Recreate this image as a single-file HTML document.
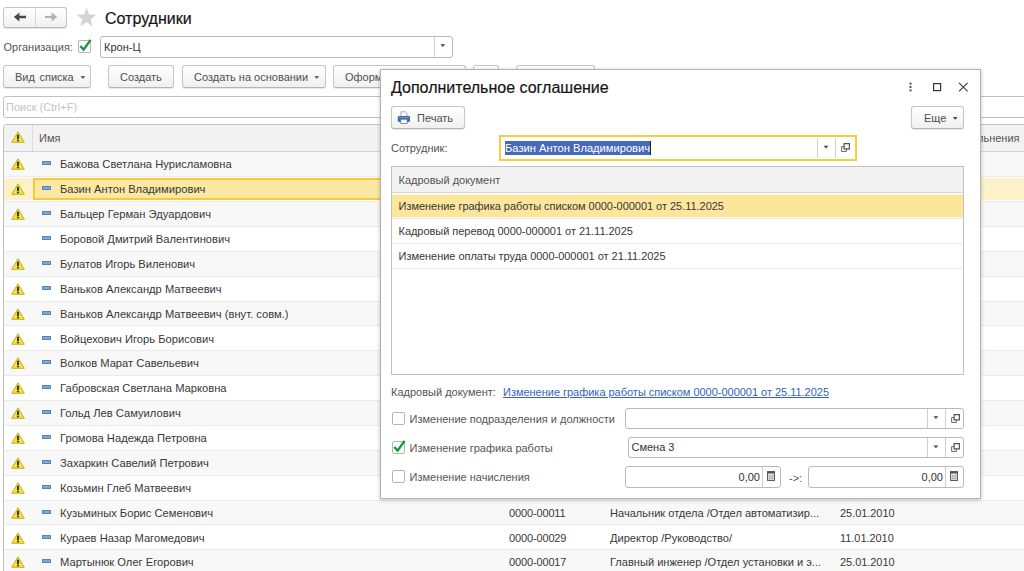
<!DOCTYPE html>
<html><head><meta charset="utf-8"><title>Сотрудники</title>
<style>
*{box-sizing:border-box;margin:0;padding:0}
html,body{width:1024px;height:571px;overflow:hidden;background:#fff}
body{font-family:"Liberation Sans",sans-serif;font-size:11px;color:#333;position:relative}
.abs{position:absolute}
.btn{position:absolute;height:23px;border:1px solid #c6c6c6;border-bottom-color:#b4b4b4;border-radius:3px;background:linear-gradient(#ffffff,#f0f0f0);box-shadow:0 1px 1px rgba(0,0,0,.10);color:#505050;font-size:11px;line-height:21px;white-space:nowrap}
.btn span{position:absolute;top:1px}
.inp{position:absolute;border:1px solid #b9b9b9;border-radius:3px;background:#fff;height:22px;line-height:20px;white-space:nowrap}
.t{position:absolute;white-space:nowrap;line-height:14px}
.lbl{color:#555}
.ttl{font-size:16px;line-height:20px;color:#151515;-webkit-text-stroke:0.2px #151515}
.row{position:absolute;left:4px;width:1020px;height:25px;border-bottom:1px solid #ededed}
.row.alt{background:#f9f9f9}
.row .t{top:6px;color:#333}
.selbox{position:absolute;left:29px;top:0;width:991px;height:25px;background:#fbe8a0;border:2px solid #f7c935}
.warn{position:absolute;left:7px;top:7px}
.rt{color:#383838;font-size:11.18px}
.dash{position:absolute;left:42px;width:9px;height:4px;border-radius:0.5px;background:#7aa9dc;border:1px solid #5583b8}
.vl{position:absolute;width:1px;background:#cfcfcf}
.cb{position:absolute;width:13px;height:13px;border:1px solid #b5b5b5;border-radius:2px;background:#fff}
</style></head><body>
<div class="btn" style="left:3px;top:7px;width:64px;height:21px"></div><div class="vl" style="left:35px;top:8px;height:19px;background:#d8d8d8"></div><svg class="abs" style="left:12px;top:11px" width="16" height="12" viewBox="0 0 16 12"><path d="M1.8 6 L7.4 1.6 L7.4 4.7 L14 4.7 L14 7.3 L7.4 7.3 L7.4 10.4 Z" fill="#4a4a4a"/></svg><svg class="abs" style="left:43px;top:11px" width="16" height="12" viewBox="0 0 16 12"><path d="M14.2 6 L8.6 1.6 L8.6 4.9 L2 4.9 L2 7.1 L8.6 7.1 L8.6 10.4 Z" fill="#b0b0b0"/></svg><svg class="abs" style="left:76px;top:7px" width="21" height="20" viewBox="0 0 21 20"><path d="M10.5 0.8 L13.1 7.4 L20.3 7.7 L14.7 12.2 L16.6 19.2 L10.5 15.2 L4.4 19.2 L6.3 12.2 L0.7 7.7 L7.9 7.4 Z" fill="#d4d4d4"/></svg><div class="t ttl" style="left:105px;top:9px">Сотрудники</div>
<div class="t lbl" style="left:3.5px;top:40px">Организация:</div><div class="cb" style="left:78px;top:40px"></div><svg class="abs" style="left:78px;top:38px" width="15" height="15" viewBox="0 0 15 15"><path d="M2.3 8 L5.6 11.6 L12.6 1.8" stroke="#14993a" stroke-width="2.3" fill="none"/></svg><div class="inp" style="left:100px;top:36px;width:353px"><span style="padding-left:3px;color:#333">Крон-Ц</span></div><div class="vl" style="left:434px;top:37px;height:20px"></div><svg class="abs" style="left:439px;top:43px" width="8" height="6" viewBox="0 0 8 6"><path d="M1.40 1.25 H6.20 L3.80 3.95 Z" fill="#454545"/></svg>
<div class="btn" style="left:3px;top:65px;width:88px"><span style="left:11px;word-spacing:1.5px">Вид списка</span></div><svg class="abs" style="left:79px;top:75px" width="8" height="6" viewBox="0 0 8 6"><path d="M1.50 1.15 H6.30 L3.90 3.85 Z" fill="#454545"/></svg><div class="btn" style="left:108px;top:65px;width:66px"><span style="left:11px">Создать</span></div><div class="btn" style="left:182px;top:65px;width:144px"><span style="left:11px">Создать на основании</span></div><svg class="abs" style="left:313px;top:75px" width="8" height="6" viewBox="0 0 8 6"><path d="M1.35 1.15 H6.15 L3.75 3.85 Z" fill="#454545"/></svg><div class="btn" style="left:333px;top:65px;width:133px"><span style="left:11px">Оформить</span></div><div class="btn" style="left:473px;top:65px;width:26px"></div><div class="btn" style="left:516px;top:65px;width:79px"></div>
<div class="inp" style="left:3px;top:96px;width:1030px;border-color:#c0c0c0"><span style="padding-left:2px;color:#c4c4c4">Поиск (Ctrl+F)</span></div>
<div class="abs" style="left:3px;top:124px;width:1040px;height:500px;border:1px solid #c2c2c2;border-radius:3px"></div><div class="abs" style="left:4px;top:125px;width:1020px;height:27px;background:#f2f2f2;border-bottom:1px solid #d4d4d4;border-radius:2px 0 0 0"></div><div class="vl" style="left:32px;top:125px;height:26px;background:#dadada"></div><svg class="abs" style="left:11px;top:131px" width="14" height="12" viewBox="0 0 14 12"><path d="M7 0.8 L13.3 11.3 L0.7 11.3 Z" fill="#f7e334" stroke="#c4ae22" stroke-width="1" stroke-linejoin="round"/><rect x="5.95" y="3.7" width="2.1" height="4.3" fill="#3d3a1c"/><rect x="5.95" y="8.7" width="2.1" height="1.6" fill="#3d3a1c"/></svg><div class="t lbl" style="left:39px;top:131px">Имя</div><div class="t lbl" style="left:977px;top:131px">льнения</div>
<div class="abs" style="left:4px;top:152px;width:1020px;height:24px;background:#f8f8f8"></div><div class="abs" style="left:4px;top:176px;width:1020px;height:1px;background:#ebebeb"></div><svg class="abs" style="left:11px;top:158px" width="14" height="12" viewBox="0 0 14 12"><path d="M7 0.8 L13.3 11.3 L0.7 11.3 Z" fill="#f7e334" stroke="#c4ae22" stroke-width="1" stroke-linejoin="round"/><rect x="5.95" y="3.7" width="2.1" height="4.3" fill="#3d3a1c"/><rect x="5.95" y="8.7" width="2.1" height="1.6" fill="#3d3a1c"/></svg><div class="dash" style="top:161px"></div><div class="t rt" style="left:60px;top:157px">Бажова Светлана Нурисламовна</div>
<div class="abs" style="left:4px;top:178px;width:1020px;height:22px;background:#fdf1c9"></div><div class="abs" style="left:33px;top:178px;width:460px;height:22px;background:#fbe8a2;border:2px solid #f8ca38"></div><div class="abs" style="left:4px;top:201px;width:1020px;height:1px;background:#ebebeb"></div><svg class="abs" style="left:11px;top:183px" width="14" height="12" viewBox="0 0 14 12"><path d="M7 0.8 L13.3 11.3 L0.7 11.3 Z" fill="#f7e334" stroke="#c4ae22" stroke-width="1" stroke-linejoin="round"/><rect x="5.95" y="3.7" width="2.1" height="4.3" fill="#3d3a1c"/><rect x="5.95" y="8.7" width="2.1" height="1.6" fill="#3d3a1c"/></svg><div class="dash" style="top:186px"></div><div class="t rt" style="left:60px;top:182px">Базин Антон Владимирович</div>
<div class="abs" style="left:4px;top:202px;width:1020px;height:24px;background:#f8f8f8"></div><div class="abs" style="left:4px;top:226px;width:1020px;height:1px;background:#ebebeb"></div><svg class="abs" style="left:11px;top:208px" width="14" height="12" viewBox="0 0 14 12"><path d="M7 0.8 L13.3 11.3 L0.7 11.3 Z" fill="#f7e334" stroke="#c4ae22" stroke-width="1" stroke-linejoin="round"/><rect x="5.95" y="3.7" width="2.1" height="4.3" fill="#3d3a1c"/><rect x="5.95" y="8.7" width="2.1" height="1.6" fill="#3d3a1c"/></svg><div class="dash" style="top:211px"></div><div class="t rt" style="left:60px;top:207px">Бальцер Герман Эдуардович</div>
<div class="abs" style="left:4px;top:251px;width:1020px;height:1px;background:#ebebeb"></div><div class="dash" style="top:236px"></div><div class="t rt" style="left:60px;top:232px">Боровой Дмитрий Валентинович</div>
<div class="abs" style="left:4px;top:252px;width:1020px;height:24px;background:#f8f8f8"></div><div class="abs" style="left:4px;top:276px;width:1020px;height:1px;background:#ebebeb"></div><svg class="abs" style="left:11px;top:258px" width="14" height="12" viewBox="0 0 14 12"><path d="M7 0.8 L13.3 11.3 L0.7 11.3 Z" fill="#f7e334" stroke="#c4ae22" stroke-width="1" stroke-linejoin="round"/><rect x="5.95" y="3.7" width="2.1" height="4.3" fill="#3d3a1c"/><rect x="5.95" y="8.7" width="2.1" height="1.6" fill="#3d3a1c"/></svg><div class="dash" style="top:261px"></div><div class="t rt" style="left:60px;top:257px">Булатов Игорь Виленович</div>
<div class="abs" style="left:4px;top:301px;width:1020px;height:1px;background:#ebebeb"></div><svg class="abs" style="left:11px;top:283px" width="14" height="12" viewBox="0 0 14 12"><path d="M7 0.8 L13.3 11.3 L0.7 11.3 Z" fill="#f7e334" stroke="#c4ae22" stroke-width="1" stroke-linejoin="round"/><rect x="5.95" y="3.7" width="2.1" height="4.3" fill="#3d3a1c"/><rect x="5.95" y="8.7" width="2.1" height="1.6" fill="#3d3a1c"/></svg><div class="dash" style="top:286px"></div><div class="t rt" style="left:60px;top:282px">Ваньков Александр Матвеевич</div>
<div class="abs" style="left:4px;top:302px;width:1020px;height:23px;background:#f8f8f8"></div><div class="abs" style="left:4px;top:325px;width:1020px;height:1px;background:#ebebeb"></div><svg class="abs" style="left:11px;top:308px" width="14" height="12" viewBox="0 0 14 12"><path d="M7 0.8 L13.3 11.3 L0.7 11.3 Z" fill="#f7e334" stroke="#c4ae22" stroke-width="1" stroke-linejoin="round"/><rect x="5.95" y="3.7" width="2.1" height="4.3" fill="#3d3a1c"/><rect x="5.95" y="8.7" width="2.1" height="1.6" fill="#3d3a1c"/></svg><div class="dash" style="top:311px"></div><div class="t rt" style="left:60px;top:307px">Ваньков Александр Матвеевич (внут. совм.)</div>
<div class="abs" style="left:4px;top:350px;width:1020px;height:1px;background:#ebebeb"></div><svg class="abs" style="left:11px;top:333px" width="14" height="12" viewBox="0 0 14 12"><path d="M7 0.8 L13.3 11.3 L0.7 11.3 Z" fill="#f7e334" stroke="#c4ae22" stroke-width="1" stroke-linejoin="round"/><rect x="5.95" y="3.7" width="2.1" height="4.3" fill="#3d3a1c"/><rect x="5.95" y="8.7" width="2.1" height="1.6" fill="#3d3a1c"/></svg><div class="dash" style="top:336px"></div><div class="t rt" style="left:60px;top:332px">Войцехович Игорь Борисович</div>
<div class="abs" style="left:4px;top:351px;width:1020px;height:24px;background:#f8f8f8"></div><div class="abs" style="left:4px;top:375px;width:1020px;height:1px;background:#ebebeb"></div><svg class="abs" style="left:11px;top:357px" width="14" height="12" viewBox="0 0 14 12"><path d="M7 0.8 L13.3 11.3 L0.7 11.3 Z" fill="#f7e334" stroke="#c4ae22" stroke-width="1" stroke-linejoin="round"/><rect x="5.95" y="3.7" width="2.1" height="4.3" fill="#3d3a1c"/><rect x="5.95" y="8.7" width="2.1" height="1.6" fill="#3d3a1c"/></svg><div class="dash" style="top:360px"></div><div class="t rt" style="left:60px;top:356px">Волков Марат Савельевич</div>
<div class="abs" style="left:4px;top:400px;width:1020px;height:1px;background:#ebebeb"></div><svg class="abs" style="left:11px;top:382px" width="14" height="12" viewBox="0 0 14 12"><path d="M7 0.8 L13.3 11.3 L0.7 11.3 Z" fill="#f7e334" stroke="#c4ae22" stroke-width="1" stroke-linejoin="round"/><rect x="5.95" y="3.7" width="2.1" height="4.3" fill="#3d3a1c"/><rect x="5.95" y="8.7" width="2.1" height="1.6" fill="#3d3a1c"/></svg><div class="dash" style="top:385px"></div><div class="t rt" style="left:60px;top:381px">Габровская Светлана Марковна</div>
<div class="abs" style="left:4px;top:401px;width:1020px;height:24px;background:#f8f8f8"></div><div class="abs" style="left:4px;top:425px;width:1020px;height:1px;background:#ebebeb"></div><svg class="abs" style="left:11px;top:407px" width="14" height="12" viewBox="0 0 14 12"><path d="M7 0.8 L13.3 11.3 L0.7 11.3 Z" fill="#f7e334" stroke="#c4ae22" stroke-width="1" stroke-linejoin="round"/><rect x="5.95" y="3.7" width="2.1" height="4.3" fill="#3d3a1c"/><rect x="5.95" y="8.7" width="2.1" height="1.6" fill="#3d3a1c"/></svg><div class="dash" style="top:410px"></div><div class="t rt" style="left:60px;top:406px">Гольд Лев Самуилович</div>
<div class="abs" style="left:4px;top:450px;width:1020px;height:1px;background:#ebebeb"></div><svg class="abs" style="left:11px;top:432px" width="14" height="12" viewBox="0 0 14 12"><path d="M7 0.8 L13.3 11.3 L0.7 11.3 Z" fill="#f7e334" stroke="#c4ae22" stroke-width="1" stroke-linejoin="round"/><rect x="5.95" y="3.7" width="2.1" height="4.3" fill="#3d3a1c"/><rect x="5.95" y="8.7" width="2.1" height="1.6" fill="#3d3a1c"/></svg><div class="dash" style="top:435px"></div><div class="t rt" style="left:60px;top:431px">Громова Надежда Петровна</div>
<div class="abs" style="left:4px;top:451px;width:1020px;height:24px;background:#f8f8f8"></div><div class="abs" style="left:4px;top:475px;width:1020px;height:1px;background:#ebebeb"></div><svg class="abs" style="left:11px;top:457px" width="14" height="12" viewBox="0 0 14 12"><path d="M7 0.8 L13.3 11.3 L0.7 11.3 Z" fill="#f7e334" stroke="#c4ae22" stroke-width="1" stroke-linejoin="round"/><rect x="5.95" y="3.7" width="2.1" height="4.3" fill="#3d3a1c"/><rect x="5.95" y="8.7" width="2.1" height="1.6" fill="#3d3a1c"/></svg><div class="dash" style="top:460px"></div><div class="t rt" style="left:60px;top:456px">Захаркин Савелий Петрович</div>
<div class="abs" style="left:4px;top:500px;width:1020px;height:1px;background:#ebebeb"></div><svg class="abs" style="left:11px;top:482px" width="14" height="12" viewBox="0 0 14 12"><path d="M7 0.8 L13.3 11.3 L0.7 11.3 Z" fill="#f7e334" stroke="#c4ae22" stroke-width="1" stroke-linejoin="round"/><rect x="5.95" y="3.7" width="2.1" height="4.3" fill="#3d3a1c"/><rect x="5.95" y="8.7" width="2.1" height="1.6" fill="#3d3a1c"/></svg><div class="dash" style="top:485px"></div><div class="t rt" style="left:60px;top:481px">Козьмин Глеб Матвеевич</div>
<div class="abs" style="left:4px;top:501px;width:1020px;height:23px;background:#f8f8f8"></div><div class="abs" style="left:4px;top:524px;width:1020px;height:1px;background:#ebebeb"></div><svg class="abs" style="left:11px;top:507px" width="14" height="12" viewBox="0 0 14 12"><path d="M7 0.8 L13.3 11.3 L0.7 11.3 Z" fill="#f7e334" stroke="#c4ae22" stroke-width="1" stroke-linejoin="round"/><rect x="5.95" y="3.7" width="2.1" height="4.3" fill="#3d3a1c"/><rect x="5.95" y="8.7" width="2.1" height="1.6" fill="#3d3a1c"/></svg><div class="dash" style="top:510px"></div><div class="t rt" style="left:60px;top:506px">Кузьминых Борис Семенович</div><div class="t rt" style="left:509px;top:506px;font-size:11px;letter-spacing:-0.14px">0000-00011</div><div class="t rt" style="left:610px;top:506px;font-size:11.07px">Начальник отдела /Отдел автоматизир...</div><div class="t rt" style="left:840px;top:506px;font-size:11px;letter-spacing:-0.05px">25.01.2010</div>
<div class="abs" style="left:4px;top:549px;width:1020px;height:1px;background:#ebebeb"></div><svg class="abs" style="left:11px;top:532px" width="14" height="12" viewBox="0 0 14 12"><path d="M7 0.8 L13.3 11.3 L0.7 11.3 Z" fill="#f7e334" stroke="#c4ae22" stroke-width="1" stroke-linejoin="round"/><rect x="5.95" y="3.7" width="2.1" height="4.3" fill="#3d3a1c"/><rect x="5.95" y="8.7" width="2.1" height="1.6" fill="#3d3a1c"/></svg><div class="dash" style="top:535px"></div><div class="t rt" style="left:60px;top:531px">Кураев Назар Магомедович</div><div class="t rt" style="left:509px;top:531px;font-size:11px;letter-spacing:-0.14px">0000-00029</div><div class="t rt" style="left:610px;top:531px;font-size:11.07px">Директор /Руководство/</div><div class="t rt" style="left:840px;top:531px;font-size:11px;letter-spacing:-0.05px">11.01.2010</div>
<div class="abs" style="left:4px;top:550px;width:1020px;height:24px;background:#f8f8f8"></div><div class="abs" style="left:4px;top:574px;width:1020px;height:1px;background:#ebebeb"></div><svg class="abs" style="left:11px;top:556px" width="14" height="12" viewBox="0 0 14 12"><path d="M7 0.8 L13.3 11.3 L0.7 11.3 Z" fill="#f7e334" stroke="#c4ae22" stroke-width="1" stroke-linejoin="round"/><rect x="5.95" y="3.7" width="2.1" height="4.3" fill="#3d3a1c"/><rect x="5.95" y="8.7" width="2.1" height="1.6" fill="#3d3a1c"/></svg><div class="dash" style="top:559px"></div><div class="t rt" style="left:60px;top:555px">Мартынюк Олег Егорович</div><div class="t rt" style="left:509px;top:555px;font-size:11px;letter-spacing:-0.14px">0000-00017</div><div class="t rt" style="left:610px;top:555px;font-size:11.07px">Главный инженер /Отдел установки и э...</div><div class="t rt" style="left:840px;top:555px;font-size:11px;letter-spacing:-0.05px">25.01.2010</div>
<div class="abs" style="left:380px;top:69px;width:601px;height:430px;background:#fff;border:1px solid #b2b2b2;box-shadow:0 1px 4px rgba(0,0,0,.24)"></div><div class="t ttl" style="left:391px;top:78px">Дополнительное соглашение</div><svg class="abs" style="left:908px;top:81px" width="64" height="12" viewBox="0 0 64 12"><rect x="1.5" y="1.6" width="2" height="2" fill="#555"/><rect x="1.5" y="5" width="2" height="2" fill="#555"/><rect x="1.5" y="8.4" width="2" height="2" fill="#555"/><rect x="25.6" y="2.6" width="7" height="7" fill="none" stroke="#333" stroke-width="1.2"/><path d="M51 1.8 L59.6 10.4 M59.6 1.8 L51 10.4" stroke="#444" stroke-width="1.2"/></svg><div class="btn" style="left:391px;top:106px;width:74px"><span style="left:25px">Печать</span></div><svg class="abs" style="left:397px;top:111px" width="14" height="13" viewBox="0 0 14 13"><path d="M4 0.8 H8.2 L10 2.6 V6 H4 Z" fill="#fff" stroke="#8aa3c2" stroke-width="0.9"/><rect x="0.8" y="5" width="12.2" height="6" rx="1.3" fill="#3f6ba3"/><rect x="2" y="6" width="9.8" height="1" fill="#6f94c4"/><rect x="3.7" y="8.2" width="6.4" height="4.2" fill="#fff" stroke="#55749e" stroke-width="0.8"/></svg><div class="btn" style="left:911px;top:106px;width:53px"><span style="left:12px">Еще</span></div><svg class="abs" style="left:951px;top:115px" width="8" height="6" viewBox="0 0 8 6"><path d="M1.85 1.95 H6.65 L4.25 4.65 Z" fill="#454545"/></svg><div class="t lbl" style="left:391px;top:141px">Сотрудник:</div><div class="abs" style="left:499px;top:135px;width:358px;height:26px;border:2px solid #f9cd42;background:#fff"></div><div class="t" style="left:505px;top:141px;height:14px;line-height:14px;width:145px;overflow:hidden;font-size:11.15px;background:#4769b8;color:#fff">Базин Антон Владимирович</div><div class="vl" style="left:650px;top:141px;height:14px;background:#222"></div><div class="vl" style="left:817px;top:138px;height:20px"></div><div class="vl" style="left:835px;top:138px;height:20px"></div><svg class="abs" style="left:822px;top:144px" width="8" height="6" viewBox="0 0 8 6"><path d="M1.60 1.75 H6.40 L4.00 4.45 Z" fill="#454545"/></svg><svg class="abs" style="left:841px;top:143px" width="9" height="9" viewBox="0 0 9 9"><path d="M0.6 3.6 H5.4 V8.4 H0.6 Z" fill="none" stroke="#666" stroke-width="1"/><path d="M3.1 0.6 H8.4 V5.9 H3.1 Z" fill="#fff" stroke="#555" stroke-width="1.2"/></svg>
<div class="abs" style="left:391px;top:166px;width:573px;height:209px;border:1px solid #c2c2c2;background:#fff"></div><div class="abs" style="left:392px;top:167px;width:571px;height:26px;background:#f2f2f2;border-bottom:1px solid #d4d4d4"></div><div class="t lbl" style="left:398.5px;top:173px">Кадровый документ</div><div class="abs" style="left:392px;top:194px;width:571px;height:1px;background:#fdf5d7"></div><div class="abs" style="left:392px;top:195px;width:571px;height:22px;background:#fbe69b"></div><div class="abs" style="left:392px;top:217px;width:571px;height:1px;background:#fef7e1"></div><div class="t" style="left:398.5px;top:199px;letter-spacing:-0.03px;color:#383838">Изменение графика работы списком 0000-000001 от 25.11.2025</div><div class="abs" style="left:392px;top:218px;width:571px;height:1px;background:#e8e8e8"></div><div class="t" style="left:398.5px;top:224px;letter-spacing:-0.03px;color:#383838">Кадровый перевод 0000-000001 от 21.11.2025</div><div class="abs" style="left:392px;top:243px;width:571px;height:1px;background:#e8e8e8"></div><div class="t" style="left:398.5px;top:249px;letter-spacing:-0.03px;color:#383838">Изменение оплаты труда 0000-000001 от 21.11.2025</div><div class="abs" style="left:392px;top:268px;width:571px;height:1px;background:#e8e8e8"></div>
<div class="t lbl" style="left:391px;top:385px">Кадровый документ:</div><div class="t" style="left:503px;top:385px;color:#3263c3;text-decoration:underline;letter-spacing:-0.02px">Изменение графика работы списком 0000-000001 от 25.11.2025</div>
<div class="cb" style="left:392px;top:412px"></div><div class="t lbl" style="left:409.5px;top:412px">Изменение подразделения и должности</div><div class="inp" style="left:625px;top:408px;width:339px;height:21px"></div><div class="vl" style="left:927px;top:409px;height:19px"></div><div class="vl" style="left:945px;top:409px;height:19px"></div><svg class="abs" style="left:932px;top:415px" width="8" height="6" viewBox="0 0 8 6"><path d="M1.50 1.25 H6.30 L3.90 3.95 Z" fill="#454545"/></svg><svg class="abs" style="left:950.5px;top:413.5px" width="9" height="9" viewBox="0 0 9 9"><path d="M0.6 3.6 H5.4 V8.4 H0.6 Z" fill="none" stroke="#666" stroke-width="1"/><path d="M3.1 0.6 H8.4 V5.9 H3.1 Z" fill="#fff" stroke="#555" stroke-width="1.2"/></svg><div class="cb" style="left:392px;top:441px"></div><svg class="abs" style="left:392px;top:439px" width="15" height="15" viewBox="0 0 15 15"><path d="M2.3 8 L5.6 11.6 L12.6 1.8" stroke="#14993a" stroke-width="2.3" fill="none"/></svg><div class="t lbl" style="left:409.5px;top:441px">Изменение графика работы</div><div class="inp" style="left:628px;top:437px;width:336px;height:21px;line-height:19px"><span style="padding-left:2.5px;color:#333">Смена 3</span></div><div class="vl" style="left:927px;top:438px;height:19px"></div><div class="vl" style="left:945px;top:438px;height:19px"></div><svg class="abs" style="left:932px;top:444px" width="8" height="6" viewBox="0 0 8 6"><path d="M1.50 1.55 H6.30 L3.90 4.25 Z" fill="#454545"/></svg><svg class="abs" style="left:950.5px;top:443px" width="9" height="9" viewBox="0 0 9 9"><path d="M0.6 3.6 H5.4 V8.4 H0.6 Z" fill="none" stroke="#666" stroke-width="1"/><path d="M3.1 0.6 H8.4 V5.9 H3.1 Z" fill="#fff" stroke="#555" stroke-width="1.2"/></svg><div class="cb" style="left:392px;top:470px"></div><div class="t lbl" style="left:409.5px;top:470px">Изменение начисления</div><div class="inp" style="left:625px;top:466px;width:156px;text-align:right;padding-right:20px;color:#333">0,00</div><div class="vl" style="left:762px;top:467px;height:20px"></div><svg class="abs" style="left:767px;top:471px" width="8" height="10" viewBox="0 0 8 10"><rect x="0.6" y="0.6" width="6.8" height="8.8" fill="#fff" stroke="#555" stroke-width="1.1"/><rect x="0.6" y="0.6" width="6.8" height="2" fill="#555"/><rect x="2.2" y="4.2" width="3.6" height="3.6" fill="none" stroke="#9a9a9a" stroke-width="0.8"/><path d="M4 4.2 V7.8 M2.2 6 H5.8" stroke="#aaa" stroke-width="0.6"/></svg><div class="t lbl" style="left:789px;top:471px">-&gt;:</div><div class="inp" style="left:808px;top:466px;width:156px;text-align:right;padding-right:20px;color:#333">0,00</div><div class="vl" style="left:945px;top:467px;height:20px"></div><svg class="abs" style="left:950px;top:471px" width="8" height="10" viewBox="0 0 8 10"><rect x="0.6" y="0.6" width="6.8" height="8.8" fill="#fff" stroke="#555" stroke-width="1.1"/><rect x="0.6" y="0.6" width="6.8" height="2" fill="#555"/><rect x="2.2" y="4.2" width="3.6" height="3.6" fill="none" stroke="#9a9a9a" stroke-width="0.8"/><path d="M4 4.2 V7.8 M2.2 6 H5.8" stroke="#aaa" stroke-width="0.6"/></svg>
</body></html>
